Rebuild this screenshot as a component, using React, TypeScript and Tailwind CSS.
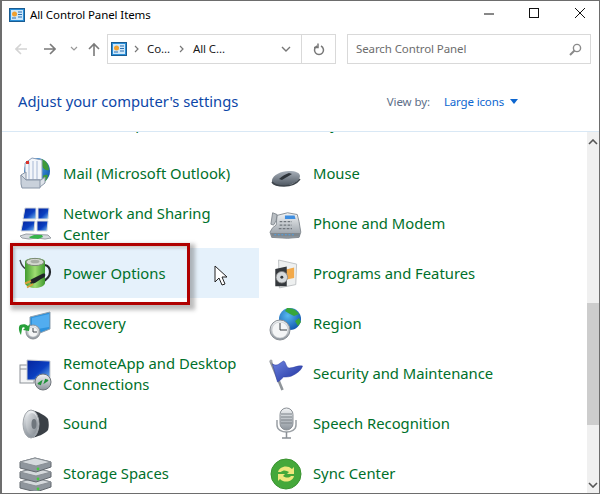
import type { ReactNode } from "react";

const Ico = ({ children }: { children: ReactNode }) => (
  <svg width="36" height="36" viewBox="0 0 36 36" className="shrink-0">
    {children}
  </svg>
);

function Defs() {
  return (
    <svg width="0" height="0" className="absolute">
      <defs>
        <linearGradient id="metal" x1="0" y1="0" x2="0" y2="1">
          <stop offset="0" stopColor="#f2f4f6" />
          <stop offset="1" stopColor="#8c949c" />
        </linearGradient>
        <linearGradient id="dark" x1="0" y1="0" x2="0" y2="1">
          <stop offset="0" stopColor="#a8b0ba" />
          <stop offset="1" stopColor="#4d5660" />
        </linearGradient>
        <linearGradient id="batt" x1="0" y1="0" x2="1" y2="0">
          <stop offset="0" stopColor="#3f9a2e" />
          <stop offset="0.5" stopColor="#9fdc72" />
          <stop offset="1" stopColor="#3f9a2e" />
        </linearGradient>
        <linearGradient id="screen" x1="0" y1="0" x2="1" y2="1">
          <stop offset="0" stopColor="#06249c" />
          <stop offset="0.55" stopColor="#0a3fc0" />
          <stop offset="1" stopColor="#7cc0f2" />
        </linearGradient>
        <radialGradient id="globe" cx="0.4" cy="0.35" r="0.75">
          <stop offset="0" stopColor="#58b8f0" />
          <stop offset="1" stopColor="#0b4fa8" />
        </radialGradient>
        <linearGradient id="flag" x1="0" y1="0" x2="1" y2="1">
          <stop offset="0" stopColor="#6d83e0" />
          <stop offset="1" stopColor="#1c2f9c" />
        </linearGradient>
        <linearGradient id="cone" x1="0" y1="0" x2="1" y2="1">
          <stop offset="0" stopColor="#e4e7ea" />
          <stop offset="1" stopColor="#7f868d" />
        </linearGradient>
      </defs>
    </svg>
  );
}

const Clock = ({ cx, cy, r }: { cx: number; cy: number; r: number }) => (
  <g>
    <circle cx={cx} cy={cy} r={r} fill="url(#metal)" stroke="#8b9096" strokeWidth="1" />
    <circle cx={cx} cy={cy} r={r - 2} fill="#f4f5f6" stroke="#c2c6ca" strokeWidth="0.6" />
    <path d={`M${cx} ${cy - r + 3}V${cy}H${cx + r - 3}`} fill="none" stroke="#3c4248" strokeWidth="1" />
  </g>
);

const InternetIcon = () => (
  <Ico>
    <path d="M8 0h22v6a2 2 0 0 1-2 2H10a2 2 0 0 1-2-2z" fill="#e4e7ea" stroke="#8d9298" />
    <path d="M16 2l2 3 3-4" fill="none" stroke="#1b78c8" strokeWidth="1.5" />
    <path d="M24 3h4" stroke="#555" />
  </Ico>
);

const MailIcon = () => (
  <Ico>
    <circle cx="20" cy="16" r="13" fill="url(#globe)" />
    <path d="M24 4c5 1 8 6 8 11-3 1-6-1-7-4z" fill="#3d9a3a" />
    <path d="M26 21c3-2 5-1 5 0-1 4-3 6-5 7z" fill="#3d9a3a" />
    <path d="M8 8l7-5 10 2v20H8z" fill="#f3f6fa" stroke="#8ea0ba" />
    <path d="M12 7v18M16 6v19M20 6v19" stroke="#a7b8d4" />
    <rect x="9" y="6" width="3" height="3" fill="#d9332b" />
    <path d="M4 20l5-3v8h15l4-3v6l-5 4H5z" fill="#dfe4ea" stroke="#8a97a8" />
    <path d="M4 20v9l1 4h18v-8H9z" fill="#c9d1db" stroke="#8a97a8" />
  </Ico>
);

const NetworkIcon = () => (
  <Ico>
    <path d="M8 3h11v11H6z" fill="url(#screen)" stroke="#d4d8dc" />
    <path d="M21 3h11l-1 11H21z" fill="url(#screen)" stroke="#d4d8dc" />
    <path d="M6 16h12l-1 10H4z" fill="url(#screen)" stroke="#d4d8dc" />
    <path d="M20 16h11l-1 10H20z" fill="url(#screen)" stroke="#d4d8dc" />
    <path d="M3 31l6-2 22 1 3 3-6 1-8-1-8 1-7-1z" fill="#d5d9dd" stroke="#9aa0a6" />
    <path d="M12 32l5-2 8 0 1 2-5 2-8-1z" fill="#37b54a" />
  </Ico>
);

const PowerIcon = () => (
  <Ico>
    <path d="M28 10c4 1 5 4 5 7 0 5-4 8-8 10" fill="none" stroke="#23282c" strokeWidth="2.2" />
    <path d="M3 5c1 4 2 7 6 9" fill="none" stroke="#3c4348" strokeWidth="1.4" />
    <path d="M8 7c0-3 6-4 10-4s10 1 10 4v21c0 3-6 5-10 5s-10-2-10-5z" fill="url(#batt)" />
    <ellipse cx="18" cy="7" rx="9" ry="3.6" fill="#d4d8d0" stroke="#7e8a78" />
    <ellipse cx="18" cy="6.500" rx="4.500" ry="1.800" fill="#a7aea4" />
    <path d="M28 19c1 2-1 4-4 5l-6 4c-3 1-4 1-5 0-1-2 0-3 2-4l8-4c2-1 4-2 5-1z" fill="#1f2327" />
    <path d="M14 26l-6 2.500M16 29l-6 3.500" stroke="#d8a03c" strokeWidth="2" />
  </Ico>
);

const RecoveryIcon = () => (
  <Ico>
    <path d="M13 12L33 7v17l-10 4-10-3z" fill="#2d92dd" stroke="#8fa0ae" />
    <path d="M15 13l17-4v13l-17 3z" fill="#52adf0" />
    <Clock cx={16} cy={27} r={7} />
    <path d="M3 20c3-1 6-1 8 1l2-2-1 7-6-1 2-2c-1-1-3-1-3 1l-1 6c-2-3-3-8-1-10z" fill="#28a03a" />
  </Ico>
);

const RemoteIcon = () => (
  <Ico>
    <rect x="3" y="10" width="14" height="18" fill="#f4f5f6" stroke="#8d9298" />
    <path d="M3 14h14" stroke="#8d9298" />
    <path d="M10 5l23 1v19H10z" fill="url(#screen)" stroke="#c8ccd0" />
    <circle cx="26" cy="27" r="8" fill="url(#metal)" stroke="#6f757b" />
    <path d="M21 29l3-2-1 3M31 25l-3 2 1-3" fill="none" stroke="#22913a" strokeWidth="1.8" />
  </Ico>
);

const SoundIcon = () => (
  <Ico>
    <path d="M14 5c6 1 14 5 17 9 1 4 1 8 0 11-3 4-11 7-17 8z" fill="#3a4046" />
    <ellipse cx="14" cy="19" rx="8" ry="14" fill="url(#metal)" stroke="#a2a7ac" />
    <ellipse cx="15" cy="19" rx="6" ry="11" fill="url(#cone)" />
    <ellipse cx="17" cy="19" rx="2.500" ry="5" fill="#6f767d" />
  </Ico>
);

const StorageIcon = () => (
  <Ico>
    {[22, 12, 2].map((y) => (
      <g key={y}>
        <path d={`M3 ${y + 5}l15-4 16 4v5l-15 5-16-4z`} fill="#8f969d" stroke="#62686e" />
        <path d={`M3 ${y + 5}l15-4 16 4-15 4z`} fill="#d6dadd" stroke="#8a9096" />
        <circle cx="21" cy={y + 12} r="1.400" fill="#45c840" />
      </g>
    ))}
  </Ico>
);

const MouseIcon = () => (
  <Ico>
    <path d="M5 25c1-5 9-9 17-9 7 0 11 2 11 5 0 5-8 9-16 10-8 0-13-2-12-6z" fill="url(#dark)" />
    <path d="M12 24c3-3 7-5 10-6l3 1c-3 2-7 4-10 6z" fill="#2e343a" />
    <path d="M5 27c2 3 7 4 12 4 7 0 13-3 16-7" fill="none" stroke="#3e454c" strokeWidth="1.5" />
  </Ico>
);

const PhoneIcon = () => (
  <Ico>
    <g transform="translate(3 6) scale(0.88 0.88)">
      <path d="M8 5l12-3 11 2 2 8 2 12-2 6-13 1-18-1-2-6 3-5 4-3z" fill="url(#metal)" stroke="#7e858c" />
      <path d="M17 5l11 0 1 4-12 0z" fill="#3f8ee0" />
      <path d="M3 2l5 2-1 7-3 5-3-1z" fill="#b9bec3" stroke="#7e858c" />
      <path d="M11 12h14M11 16h14M10 20h15" stroke="#6f757b" strokeWidth="1.5" strokeDasharray="3 1.5" />
      <path d="M1 25h33v4H2z" fill="#7f878e" />
      <path d="M5 27h24" stroke="#4ea1e6" strokeWidth="1.2" strokeDasharray="2 2" />
    </g>
  </Ico>
);

const ProgramsIcon = () => (
  <Ico>
    <g transform="translate(5 5) scale(0.82 0.82)">
      <path d="M8 0l22 5-1 25-20 4z" fill="#eef0f0" stroke="#b5b9bc" />
      <path d="M16 12l11-3v13l-11 2z" fill="#f2a94a" />
      <path d="M4 11l14-3v24l-14 0z" fill="#34383c" />
      <circle cx="12" cy="21" r="7" fill="#d6dadd" stroke="#888" />
      <circle cx="12" cy="21" r="1.800" fill="#34383c" />
    </g>
  </Ico>
);

const RegionIcon = () => (
  <Ico>
    <circle cx="23" cy="14" r="11" fill="url(#globe)" />
    <path d="M20 3c6 0 9 2 12 6l-5 2-4-2-5-3z" fill="#37a63a" />
    <path d="M32 13l2 4-3 4-3-5z" fill="#37a63a" />
    <Clock cx={13} cy={25} r={10} />
  </Ico>
);

const SecurityIcon = () => (
  <Ico>
    <g transform="translate(2.5 4)">
      <path d="M1 2l12 29" stroke="#8f9499" strokeWidth="2.6" />
      <circle cx="1.500" cy="2" r="1.500" fill="#a5a9ad" />
      <path d="M3 5c5 3 7-1 11-3 3 1 2 7 6 7 5 0 8-3 13-2-1 4-5 7-9 9-3 2-7 2-10 2-2 2-4 4-6 5z" fill="url(#flag)" stroke="#2a3a9e" strokeWidth="0.5" />
    </g>
  </Ico>
);

const SpeechIcon = () => (
  <Ico>
    <rect x="13" y="3" width="13" height="22" rx="6.500" fill="url(#metal)" stroke="#8b9096" />
    <path d="M14 9h11M14 12h11M14 15h11M14 18h11" stroke="#7d8389" />
    <path d="M10 15v5c0 5 5 7 9.500 7s9.500-2 9.500-7v-5" fill="none" stroke="#9ba0a5" strokeWidth="1.5" />
    <path d="M19.500 27v6M15 33h9" stroke="#8b9096" strokeWidth="1.5" />
  </Ico>
);

const SyncIcon = () => (
  <Ico>
    <circle cx="19" cy="19" r="15" fill="#45a83a" stroke="#3a9230" />
    <path d="M11 17c1-5 9-8 14-3l2-2v7h-7l2-2c-3-2-6-2-8 0z" fill="#efe77c" />
    <path d="M27 21c-1 5-9 8-14 3l-2 2v-7h7l-2 2c3 2 6 2 8 0z" fill="#efe77c" />
  </Ico>
);

const items: { label: ReactNode; icon: ReactNode }[] = [
  { label: "Internet Options", icon: <InternetIcon /> },
  { label: "Keyboard", icon: <Ico><path d="M19 0h16l-8 7-10-3z" fill="#8c9298" /></Ico> },
  { label: "Mail (Microsoft Outlook)", icon: <MailIcon /> },
  { label: "Mouse", icon: <MouseIcon /> },
  { label: <>Network and Sharing<br />Center</>, icon: <NetworkIcon /> },
  { label: "Phone and Modem", icon: <PhoneIcon /> },
  { label: "Power Options", icon: <PowerIcon /> },
  { label: "Programs and Features", icon: <ProgramsIcon /> },
  { label: "Recovery", icon: <RecoveryIcon /> },
  { label: "Region", icon: <RegionIcon /> },
  { label: <>RemoteApp and Desktop<br />Connections</>, icon: <RemoteIcon /> },
  { label: "Security and Maintenance", icon: <SecurityIcon /> },
  { label: "Sound", icon: <SoundIcon /> },
  { label: "Speech Recognition", icon: <SpeechIcon /> },
  { label: "Storage Spaces", icon: <StorageIcon /> },
  { label: "Sync Center", icon: <SyncIcon /> },
];

const PanelIcon = () => (
  <svg width="16" height="14" viewBox="0 0 16 14">
    <rect x="0.5" y="0.5" width="15" height="13" fill="#2a8fd8" stroke="#1a5c92" />
    <rect x="2" y="2" width="12" height="10" fill="#cfe8fa" />
    <circle cx="5.5" cy="6" r="2.5" fill="#f0a030" />
    <path d="M9 4h4M9 6.5h4M9 9h4" stroke="#2a6fb0" />
    <path d="M3 10h4" stroke="#2a6fb0" />
  </svg>
);

export default function App() {
  return (
    <div className="w-[600px] h-[495px] bg-white overflow-hidden font-['Noto_Sans',sans-serif]">
      <Defs />
      <div className="w-[600px] h-[494px] border border-[#6d6d6d] border-l-2 flex flex-col relative">
        {/* title bar */}
        <div className="h-[28px] flex items-center shrink-0">
          <div className="ml-[7px] mr-[5px] flex"><PanelIcon /></div>
          <span className="text-[11.5px] tracking-[-0.1px] text-black">All Control Panel Items</span>
          <div className="ml-auto flex items-center mb-[4px]">
            <svg width="12" height="12" className="mr-[33px]"><path d="M1 7h10" stroke="#111" /></svg>
            <svg width="12" height="12" className="mr-[34px]"><rect x="1.5" y="1.5" width="9" height="9" fill="none" stroke="#111" /></svg>
            <svg width="12" height="12" className="mr-[13px]"><path d="M1 1l10 10M11 1L1 11" stroke="#111" /></svg>
          </div>
        </div>

        {/* nav bar */}
        <div className="h-[30px] mt-[5px] flex items-center shrink-0">
          <svg width="12" height="12" className="ml-[13px]"><path d="M12 6H1M6 1L1 6l5 5" fill="none" stroke="#d4d4d4" strokeWidth="1.6" /></svg>
          <svg width="12" height="12" className="ml-[17px]"><path d="M0 6h11M6 1l5 5-5 5" fill="none" stroke="#7a7a7a" strokeWidth="1.6" /></svg>
          <svg width="8" height="6" className="ml-[14px]"><path d="M1 1l3 3 3-3" fill="none" stroke="#999" strokeWidth="1.2" /></svg>
          <svg width="12" height="14" className="ml-[10px]"><path d="M6 14V2M1 7l5-5 5 5" fill="none" stroke="#7a7a7a" strokeWidth="1.6" /></svg>
          <div className="ml-[7px] w-[229px] h-[30px] border border-[#d9d9d9] flex items-center text-[11.5px] tracking-[-0.1px] text-[#1a1a1a]">
            <div className="ml-[3px] mr-[7px] flex"><PanelIcon /></div>
            <svg width="5" height="8" className="mr-[8px]"><path d="M1 1l3 3-3 3" fill="none" stroke="#777" strokeWidth="1.2" /></svg>
            <span>Co...</span>
            <svg width="5" height="8" className="ml-[9px] mr-[9px]"><path d="M1 1l3 3-3 3" fill="none" stroke="#777" strokeWidth="1.2" /></svg>
            <span>All C...</span>
            <svg width="10" height="6" className="ml-auto mr-[8px]"><path d="M1 1l4 4 4-4" fill="none" stroke="#777" strokeWidth="1.4" /></svg>
            <div className="h-full border-l border-[#d9d9d9] w-[34px] flex items-center justify-center ml-[2px]">
              <svg width="12" height="13" viewBox="0 0 12 13"><path d="M8 3a4.5 4.5 0 1 1-4 0M5 .5v4H1" fill="none" stroke="#777" strokeWidth="1.5" /></svg>
            </div>
          </div>
          <div className="ml-[11px] w-[244px] h-[30px] border border-[#d9d9d9] flex items-center text-[11.5px] tracking-[-0.1px] text-[#6d6d6d] pl-[8px]">
            <span>Search Control Panel</span>
            <svg width="13" height="13" viewBox="0 0 13 13" className="ml-auto mr-[8px]"><circle cx="8" cy="5" r="3.6" fill="none" stroke="#8a8a8a" strokeWidth="1.4" /><path d="M5.5 7.5L1 12" stroke="#8a8a8a" strokeWidth="2" /></svg>
          </div>
        </div>

        {/* header */}
        <div className="h-[67px] flex items-center shrink-0 pt-[8px]">
          <span className="ml-[16px] text-[14.75px] text-[#0d47a8]">Adjust your computer's settings</span>
          <span className="ml-auto text-[11.5px] tracking-[-0.1px] text-[#5c6e88]">View by:</span>
          <span className="ml-[14px] text-[11.5px] tracking-[-0.15px] text-[#0d66d0]">Large icons</span>
          <svg width="8" height="5" className="ml-[6px] mr-[81px]"><path d="M0 0h8L4 5z" fill="#0d66d0" /></svg>
        </div>

        {/* content */}
        <div className="flex-1 min-h-0 flex border-t border-[#d9e8f5]">
          <div className="flex-1 overflow-hidden">
            <div className="grid grid-cols-[246px_246px] gap-x-[4px] pl-[11px] mt-[-34px]">
              {items.map((item, i) => (
                <div
                  key={i}
                  className={`h-[50px] flex items-center pl-[4px] gap-[10px] text-[14.8px] leading-[21px] text-[#00702a] ${i === 6 ? "bg-[#e5f1fb]" : ""}`}
                >
                  {item.icon}
                  <span className={`whitespace-nowrap ${typeof item.label === "string" ? "" : "pt-[2px]"}`}>{item.label}</span>
                </div>
              ))}
            </div>
          </div>
          {/* scrollbar */}
          <div className="w-[12px] bg-[#f0f0f0] flex flex-col items-center shrink-0 relative">
            <svg width="10" height="6" className="mt-[7px]"><path d="M1 5l4-4 4 4" fill="none" stroke="#555" strokeWidth="1.6" /></svg>
            <div className="w-full h-[122px] bg-[#cdcdcd] mt-[158px]" />
            <svg width="10" height="6" className="mt-auto mb-[5px]"><path d="M1 1l4 4 4-4" fill="none" stroke="#555" strokeWidth="1.6" /></svg>
          </div>
        </div>

        {/* callout and cursor lying over the list */}
        <div className="absolute left-[8px] top-[242px] w-[180px] h-[62px] border-[3px] border-[#b00000] shadow-[3px_3px_4px_2px_rgba(90,90,90,0.4),inset_2px_2px_3px_rgba(90,90,90,0.35)]" />
        <svg width="14" height="21" viewBox="0 0 14 21" className="absolute left-[212px] top-[264px]">
          <path d="M1 1v16l4-4 3 7 3-1-3-7h5z" fill="#fff" stroke="#222" />
        </svg>
      </div>
    </div>
  );
}
